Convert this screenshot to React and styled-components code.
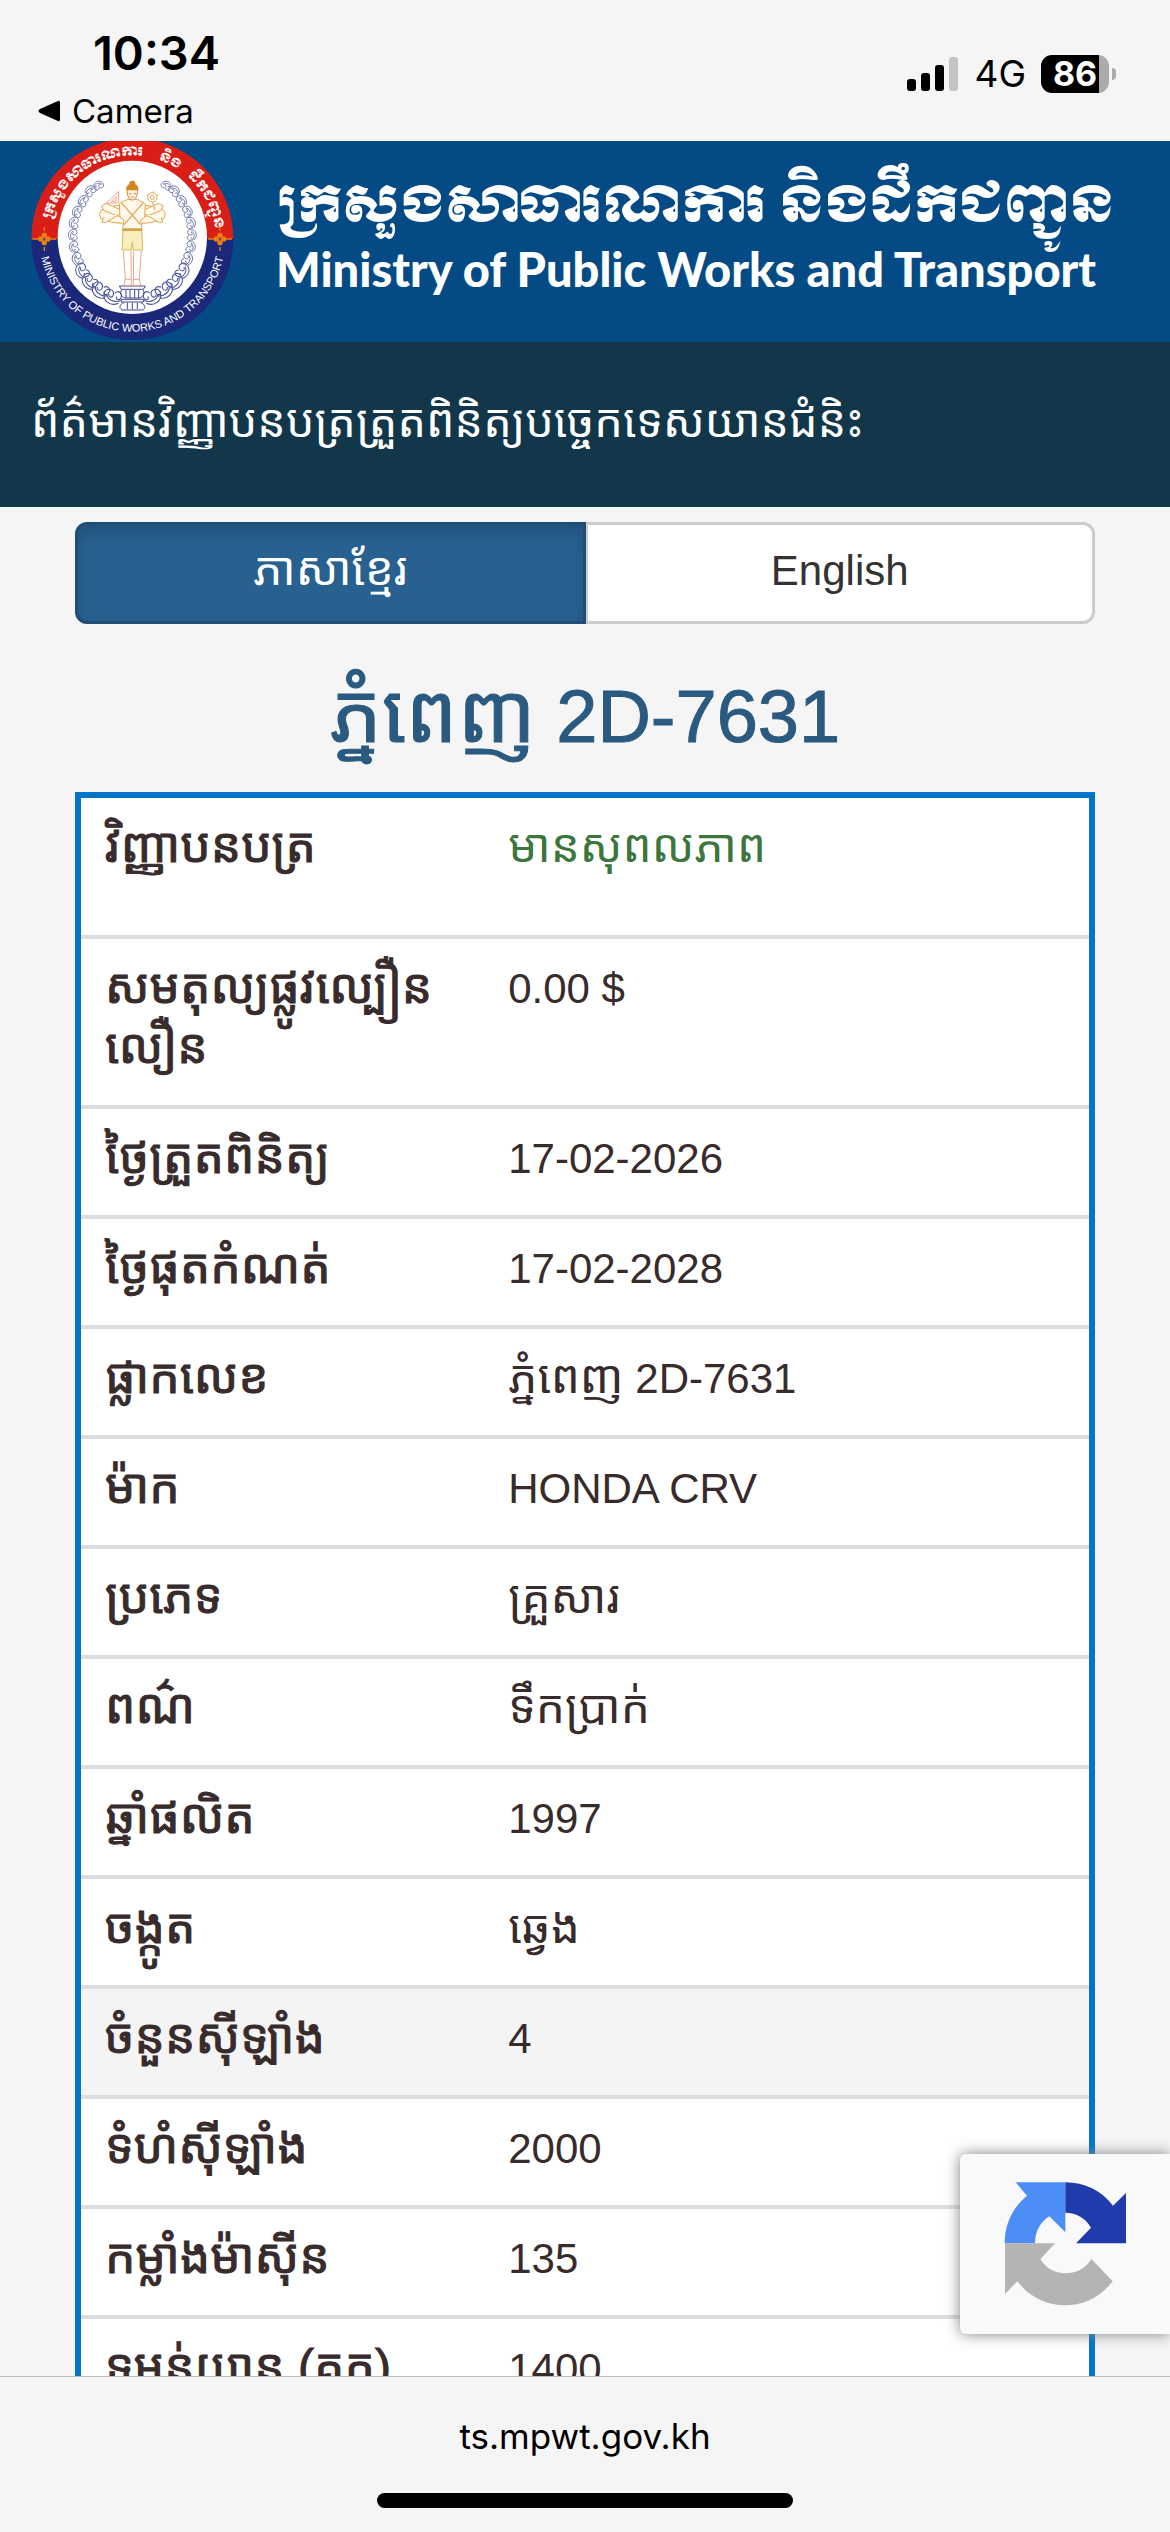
import React, { useState } from 'react';
import styled, { createGlobalStyle } from 'styled-components';

const GlobalStyle = createGlobalStyle`
  * {
    box-sizing: border-box;
  }
  body {
    margin: 0;
    background: #f5f5f5;
  }
  button {
    font: inherit;
    cursor: pointer;
  }
`;

const Screen = styled.div`
  display: flex;
  flex-direction: column;
  height: 100vh;
  overflow: hidden;
  color: #372b2c;
  font-family: 'Liberation Sans', 'Noto Sans Khmer', 'Khmer OS', sans-serif;
  font-size: 42px;
  line-height: 60px;
`;

const StatusBar = styled.header`
  display: flex;
  flex: none;
  justify-content: space-between;
  height: 141px;
  padding: 24px 54px 0 38px;
  color: #000;
  font-family: Inter, sans-serif;
`;

const StatusLeft = styled.div`
  display: flex;
  flex-direction: column;
  align-items: flex-start;
  gap: 8px;
`;

const Clock = styled.time`
  padding-left: 55px;
  font-size: 47px;
  font-weight: 600;
  line-height: 58px;
`;

const BackButton = styled.button`
  display: flex;
  align-items: center;
  gap: 12px;
  padding: 0;
  border: 0;
  background: none;
  color: #000;
  font-size: 33px;
  line-height: 42px;
`;

const StatusRight = styled.div`
  display: flex;
  align-items: center;
  align-self: flex-start;
  gap: 15px;
  height: 52px;
  margin-top: 24px;
  font-size: 37px;
`;

const Battery = styled.div`
  display: flex;
  align-items: center;
  gap: 3px;
`;

const BatteryBody = styled.div`
  width: 68px;
  height: 38px;
  border-radius: 11px;
  background: linear-gradient(to right, #000 86%, #ababab 86%);
  color: #fff;
  font-size: 34px;
  font-weight: 700;
  line-height: 38px;
  text-align: center;
`;

const BatteryTip = styled.div`
  width: 4px;
  height: 12px;
  border-radius: 0 4px 4px 0;
  background: #ababab;
`;

const Content = styled.div`
  position: relative;
  display: flex;
  flex: 1;
  min-height: 0;
`;

const Scroller = styled.main`
  flex: 1;
  overflow-y: auto;
  scrollbar-width: none;
`;

const Banner = styled.div`
  display: flex;
  gap: 42px;
  height: 201px;
  padding-left: 31px;
  background: #044b85;
  color: #fff;
`;

const BannerText = styled.div`
  display: flex;
  flex-direction: column;
  padding-top: 28px;
  white-space: nowrap;
`;

const BannerKhmer = styled.div`
  font-family: Moul, 'Khmer OS Muol Light', 'Noto Serif Khmer',
    'Noto Sans Khmer', 'Liberation Sans', sans-serif;
  font-size: 51px;
  font-weight: 400;
  line-height: 74px;
`;

const BannerEnglish = styled.div`
  font-family: Lato, sans-serif;
  font-size: 47px;
  font-weight: 900;
  line-height: 52px;
`;

const PageTitle = styled.h1`
  margin: 0;
  padding: 44px 31px 49px;
  background: #12374b;
  color: #fff;
  font-size: 45px;
  font-weight: 400;
  line-height: 72px;
  white-space: nowrap;
`;

const Container = styled.div`
  padding: 15px 75px 0;
`;

const Languages = styled.div`
  display: flex;
`;

const LanguageButton = styled.button`
  flex: 1;
  height: 102px;
  padding: 0 0 4px;
  border: 3px solid ${props => (props.$active ? '#204d74' : '#ccc')};
  background: ${props => (props.$active ? '#286090' : '#fff')};
  box-shadow: ${props =>
    props.$active ? 'inset 0 9px 15px rgba(0, 0, 0, 0.125)' : 'none'};
  color: ${props => (props.$active ? '#fff' : '#333')};
  &:first-child {
    border-radius: 12px 0 0 12px;
  }
  &:last-child {
    border-left-width: 2px;
    border-radius: 0 12px 12px 0;
  }
`;

// Khmer letters are drawn a step larger than the Latin text beside them,
// the zero line-height keeps them from stretching the line
const Khmer = styled.span`
  font-size: ${props => props.$size || 46}px;
  line-height: 0;
`;

const Plate = styled.h2`
  margin: 0;
  padding: 54px 0 36px;
  color: #2a5a80;
  font-size: 74px;
  font-weight: 400;
  line-height: 78px;
  text-align: center;
  -webkit-text-stroke: 1px #2a5a80;
`;

const Details = styled.table`
  width: 100%;
  border: 6px solid #0275cb;
  border-spacing: 0;
  background: #fff;
  table-layout: fixed;
  tr + tr > * {
    border-top: 4px solid #ddd;
  }
  tr:first-child > * {
    padding-bottom: 57px;
  }
`;

const Row = styled.tr`
  background: ${props => (props.$shaded ? '#f4f4f4' : '#fff')};
`;

const Label = styled.th`
  width: 40%;
  padding: 20px 0 26px 24px;
  font-weight: 400;
  text-align: left;
  vertical-align: top;
  -webkit-text-stroke: 1px #372b2c;
`;

const Value = styled.td`
  padding: 20px 24px 26px;
  color: ${props => (props.$valid ? '#3c763d' : 'inherit')};
  vertical-align: top;
`;

const Captcha = styled.div`
  position: absolute;
  right: 0;
  bottom: 42px;
  display: flex;
  align-items: center;
  width: 210px;
  height: 180px;
  padding-left: 44px;
  border-radius: 6px 0 0 6px;
  background: #f9f9f9;
  box-shadow: 0 0 15px #808080;
`;

const BrowserBar = styled.footer`
  display: flex;
  flex: none;
  flex-direction: column;
  align-items: center;
  justify-content: space-between;
  height: 156px;
  padding: 33px 0 24px;
  border-top: 1px solid #bbb;
  background: #f5f5f5;
`;

const Address = styled.button`
  padding: 0;
  border: 0;
  background: none;
  color: #000;
  font-family: Inter, sans-serif;
  font-size: 35px;
  line-height: 52px;
`;

const HomeIndicator = styled.div`
  width: 416px;
  height: 15px;
  border-radius: 8px;
  background: #000;
`;

const rows = [
  { label: 'វិញ្ញាបនបត្រ', khmer: 'មានសុពលភាព', valid: true },
  { label: 'សមតុល្យផ្លូវល្បឿន\u200bលឿន', value: '0.00 $' },
  { label: 'ថ្ងៃត្រួតពិនិត្យ', value: '17-02-2026' },
  { label: 'ថ្ងៃផុតកំណត់', value: '17-02-2028' },
  { label: 'ផ្លាកលេខ', khmer: 'ភ្នំពេញ', value: ' 2D-7631' },
  { label: 'ម៉ាក', value: 'HONDA CRV' },
  { label: 'ប្រភេទ', khmer: 'គ្រួសារ' },
  { label: 'ពណ៌', khmer: 'ទឹកប្រាក់' },
  { label: 'ឆ្នាំផលិត', value: '1997' },
  { label: 'ចង្កូត', khmer: 'ឆ្វេង' },
  { label: 'ចំនួនស៊ីឡាំង', value: '4', shaded: true },
  { label: 'ទំហំស៊ីឡាំង', value: '2000' },
  { label: 'កម្លាំងម៉ាស៊ីន', value: '135' },
  { label: 'ទម្ងន់យាន (គក)', value: '1400' },
];

// x, y, angle, scale of each scroll in the left half of the wreath
const scrolls = [
  [236, 136, 60, 0.8],
  [212, 152, 40, 0.9],
  [190, 182, 25, 0.9],
  [172, 214, 15, 0.9],
  [162, 248, 5, 0.9],
  [159, 284, -5, 0.9],
  [162, 320, -15, 0.9],
  [172, 356, -25, 1],
  [186, 392, -35, 1.2],
  [208, 424, -50, 1.3],
  [240, 450, -60, 1.4],
  [276, 470, -75, 1.4],
];

const Wreath = () => (
  <g fill="none" stroke="#4a5598" strokeWidth="2.4">
    {scrolls.map(([x, y, angle, scale]) => (
      <g
        key={`${x}-${y}`}
        transform={`translate(${x} ${y}) rotate(${angle}) scale(${scale})`}
      >
        <path d="M-10 17C-22 2-14-18 4-18C17-17 17 1 5 2C-3 2-4-7 3-8" />
        <path d="M-3 20C-13 7-8-9 2-12M9 4C18 10 13 21 2 19C-6 16-3 8 3 10" />
      </g>
    ))}
  </g>
);

const Flower = ({ x }) => (
  <g transform={`translate(${x} 297)`} fill="#ee7d12">
    <path d="M-36-2h72v4h-72zM-2-36h4v12h-4zM-2 24h4v12h-4z" />
    <circle cx="-11" r="8" />
    <circle cx="11" r="8" />
    <circle cy="-11" r="8" />
    <circle cy="11" r="8" />
    <circle r="4" fill="#5a4a86" />
  </g>
);

const Seal = () => (
  <svg width="203" height="201" viewBox="33 3 609 603" aria-hidden="true">
    <path d="M34 297a303 303 0 0 1 606 0z" fill="#d91e18" />
    <path d="M34 297a303 303 0 0 0 606 0z" fill="#1b287a" />
    <ellipse cx="337" cy="292" rx="224" ry="230" fill="#fff" />
    <path id="sealTop" d="M87 297a250 250 0 0 1 500 0" fill="none" />
    <path id="sealBottom" d="M59 297a278 278 0 0 0 556 0" fill="none" />
    <g
      fill="#fff"
      fontFamily="Moul, 'Noto Serif Khmer', 'Noto Sans Khmer', sans-serif"
      fontSize="38"
    >
      <text>
        <textPath href="#sealTop" startOffset="58">
          ក្រសួងសាធារណការ
        </textPath>
      </text>
      <text>
        <textPath href="#sealTop" startOffset="472">
          និង
        </textPath>
      </text>
      <text>
        <textPath href="#sealTop" startOffset="572">
          ដឹកជញ្ជូន
        </textPath>
      </text>
    </g>
    <text fill="#fff" fontFamily="Liberation Sans, sans-serif" fontSize="33">
      <textPath href="#sealBottom" startOffset="50%" textAnchor="middle">
        MINISTRY OF PUBLIC WORKS AND TRANSPORT
      </textPath>
    </text>
    <Flower x={73} />
    <Flower x={600} />
    <Wreath />
    <g transform="translate(674 0) scale(-1 1)">
      <Wreath />
    </g>
    <g fill="none" stroke="#3f4a90" strokeWidth="3">
      <path d="M298 438h78l-6 10h-66zM304 450c-6 14 4 24 14 24h38c10 0 20-10 14-24M318 450v24M330 450v24M344 450v24M356 450v24M304 478h66v8h-66zM312 488c-14 4-16 18-6 22h62c10-4 8-18-6-22M322 488v20M337 488v20M352 488v20" />
    </g>
    <g fill="#fff8ec" stroke="#e3a44c" strokeWidth="3" strokeLinejoin="round">
      <path d="M298 196c-18 0-34 10-52 12l-8 12 4 16c22 8 44 14 66 14M376 196c18 0 34 10 52 12l8 12-4 16c-22 8-44 14-66 14" />
      <path d="M298 208l-40-18-14 8 8 14 46 18M376 208l40-18 14 8-8 14-46 18" />
      <path d="M300 222l-44 26-10-2 4-14M374 222l44 26 10-2-4-14" />
      <path d="M322 178c-10 8-20 6-24 14l2 40 12 8-4 26h58l-4-26 12-8 2-40c-4-8-16-6-24-14z" />
      <path d="M304 188l58 66M370 188l-58 66" fill="none" strokeWidth="4" />
      <circle cx="397" cy="172" r="14" fill="none" />
      <circle cx="397" cy="172" r="6" fill="none" />
      <path d="M397 186l8 24M400 158v-4M384 166l-4-2M411 166l4-2" />
    </g>
    <path
      d="M258 190l38-36v34zM274 184l14-14v14z"
      fill="#fff"
      stroke="#eda584"
      strokeWidth="3"
    />
    <path
      d="M321 148c0 18 6 32 16 32s16-14 16-32z"
      fill="#fff3df"
      stroke="#c98632"
      strokeWidth="3"
    />
    <path
      d="M327 161h7M341 161h7M332 171h10"
      stroke="#8a5a2c"
      strokeWidth="2"
    />
    <path
      d="M319 151c-2-10 4-16 9-18-2-6 2-11 9-11s11 5 9 11c5 2 11 8 9 18z"
      fill="#d5851d"
    />
    <path
      d="M309 266h56l3 64h-28l-3-24-3 24h-28z"
      fill="#f8efbd"
      stroke="#d8b85c"
      strokeWidth="3"
    />
    <path d="M307 270h60" stroke="#d29238" strokeWidth="5" />
    <path
      d="M310 332l6 86-4 18h22l-1-104M364 332l-6 86 4 18h-22l1-104M316 418h17M341 418h17"
      fill="none"
      stroke="#eda584"
      strokeWidth="3"
    />
  </svg>
);

const CaptchaLogo = () => (
  <svg width="126" height="126" viewBox="311 246 378 378" aria-hidden="true">
    <path
      d="M346 250h149v150l-48-48c-26 17-43 43-43 81h-91c0-58 24-108 67-143z"
      fill="#4d8df6"
    />
    <path
      d="M495 250c58 0 108 25 143 70l39-38v151H527l45-47c-17-29-43-45-77-45z"
      fill="#203bab"
    />
    <path
      d="M314 433h150l-44 48c16 26 43 42 75 42 34 0 62-16 78-43l64 67c-35 45-84 72-142 72-59 0-108-26-144-72l-37 38z"
      fill="#b4b4b4"
    />
  </svg>
);

const App = () => {
  const [language, setLanguage] = useState('km');

  return (
    <Screen>
      <GlobalStyle />
      <StatusBar>
        <StatusLeft>
          <Clock>10:34</Clock>
          <BackButton type="button">
            <svg width="22" height="22" viewBox="0 0 22 22" aria-hidden="true">
              <path d="M20 1q2-1 2 2v16q0 3-2 2L2 13q-3-2 0-4z" />
            </svg>
            Camera
          </BackButton>
        </StatusLeft>
        <StatusRight>
          <svg width="52" height="34" viewBox="0 0 52 34" aria-hidden="true">
            <rect y="22" width="9" height="12" rx="3" />
            <rect x="14" y="16" width="9" height="18" rx="3" />
            <rect x="28" y="8" width="9" height="26" rx="3" />
            <rect x="42" width="9" height="34" rx="3" fill="#c4c4c4" />
          </svg>
          <span>4G</span>
          <Battery>
            <BatteryBody>86</BatteryBody>
            <BatteryTip />
          </Battery>
        </StatusRight>
      </StatusBar>

      <Content>
        <Scroller>
          <Banner>
            <Seal />
            <BannerText>
              <BannerKhmer>ក្រសួងសាធារណការ និងដឹកជញ្ជូន</BannerKhmer>
              <BannerEnglish>
                Ministry of Public Works and Transport
              </BannerEnglish>
            </BannerText>
          </Banner>
          <PageTitle>
            ព័ត៌មានវិញ្ញាបនបត្រត្រួតពិនិត្យបច្ចេកទេសយានជំនិះ
          </PageTitle>
          <Container>
            <Languages>
              <LanguageButton
                type="button"
                $active={language === 'km'}
                onClick={() => setLanguage('km')}
              >
                <Khmer>ភាសាខ្មែរ</Khmer>
              </LanguageButton>
              <LanguageButton
                type="button"
                $active={language === 'en'}
                onClick={() => setLanguage('en')}
              >
                English
              </LanguageButton>
            </Languages>
            <Plate>
              <Khmer $size={82}>ភ្នំពេញ</Khmer> 2D-7631
            </Plate>
            <Details>
              <tbody>
                {rows.map(row => (
                  <Row key={row.label} $shaded={row.shaded}>
                    <Label scope="row">
                      <Khmer $size={48}>{row.label}</Khmer>
                    </Label>
                    <Value $valid={row.valid}>
                      {row.khmer && <Khmer>{row.khmer}</Khmer>}
                      {row.value}
                    </Value>
                  </Row>
                ))}
              </tbody>
            </Details>
          </Container>
        </Scroller>
        <Captcha>
          <CaptchaLogo />
        </Captcha>
      </Content>

      <BrowserBar>
        <Address type="button">ts.mpwt.gov.kh</Address>
        <HomeIndicator />
      </BrowserBar>
    </Screen>
  );
};

export default App;
